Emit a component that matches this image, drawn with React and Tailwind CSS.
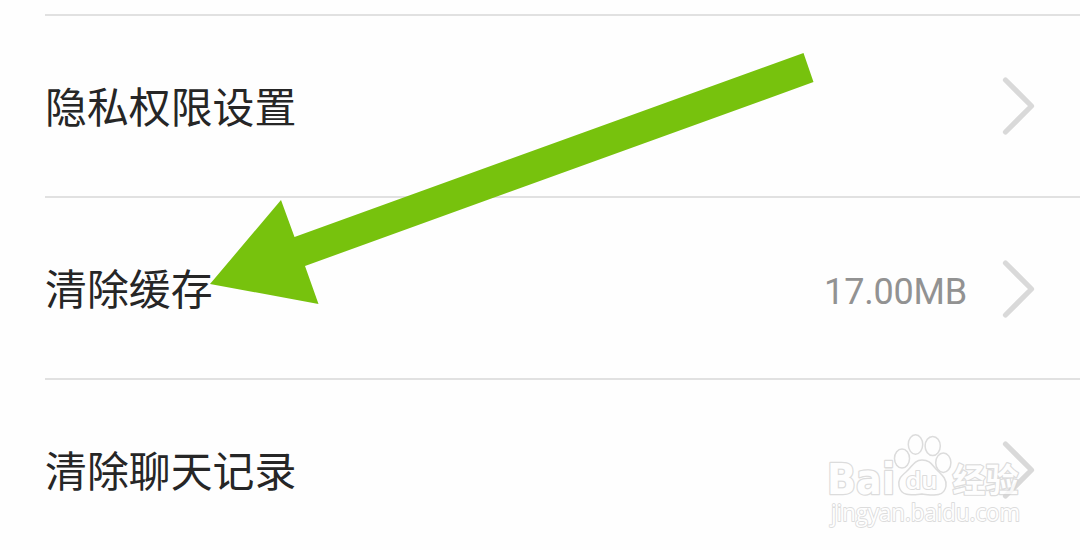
const rows = [
  { label: '隐私权限设置' },
  { label: '清除缓存', value: '17.00MB' },
  { label: '清除聊天记录' },
];

function Chevron() {
  return (
    <svg className="h-[60px] w-[36px]" viewBox="0 0 36 60" fill="none" stroke="#d9d9d9" strokeWidth="5.2" strokeLinecap="round" strokeLinejoin="round">
      <path d="M5.5 4 31.5 30 5.5 56" />
    </svg>
  );
}

function Row({ label, value }) {
  return (
    <div className="ml-[45px] flex h-[182px] shrink-0 items-center border-t-2 border-[#e1e1e1] pr-[44px]">
      <span className="mb-[2px] whitespace-nowrap text-[41.9px] leading-[60px] text-[#262626]">{label}</span>
      <span className="mt-[8px] ml-auto mr-[33px] font-[Roboto] text-[36px] leading-[44px] tracking-[-0.2px] text-[#929292]">{value}</span>
      <div className={value ? 'mt-[2px]' : 'mb-px'}>
        <Chevron />
      </div>
    </div>
  );
}

function Arrow() {
  return (
    <svg className="absolute left-0 top-0 h-[550px] w-[1080px]" viewBox="0 0 1080 550">
      <path fill="#77c20d" d="M210 284 281 200 294.5 237 803.5 53 813.5 82 305 266 318.5 304Z" />
    </svg>
  );
}

function OutlinedText({ children, outline, ...props }) {
  return (
    <text
      className="[paint-order:stroke]"
      fill="#fff"
      stroke="#d4d4d4"
      strokeWidth={outline}
      strokeLinejoin="round"
      lengthAdjust="spacingAndGlyphs"
      {...props}
    >
      {children}
    </text>
  );
}

function Watermark() {
  return (
    <svg className="absolute left-[820px] top-[425px] h-[110px] w-[215px]" viewBox="820 425 215 110" opacity="0.8">
      <OutlinedText x="827" y="494" fontFamily="DejaVu Sans" fontWeight="700" fontSize="42" textLength="68" outline={2.6}>Bai</OutlinedText>
      <g fill="#fff" stroke="#d4d4d4" strokeWidth="1.5">
        <ellipse cx="902" cy="458.5" rx="7.5" ry="9.5" />
        <ellipse cx="915.5" cy="444.5" rx="7.2" ry="9.7" />
        <ellipse cx="932.7" cy="446" rx="7.6" ry="9.5" />
        <ellipse cx="943.3" cy="462.7" rx="7.6" ry="9.7" />
        <path d="M922 460C914 460 912 467 906 472 900 477 898 480 899 486 901 497 912 495 922 494 932 495 944 498 946 486 947 479 942 475 937 470 932 465 930 460 922 460Z" />
      </g>
      <OutlinedText x="905.5" y="489" fontFamily="Open Sans" fontWeight="600" fontSize="24" textLength="32" outline={2}>du</OutlinedText>
      <OutlinedText x="952.5" y="492" fontFamily="Noto Sans CJK SC" fontWeight="700" fontSize="33" textLength="66" outline={2.4}>经验</OutlinedText>
      <OutlinedText x="831" y="520.5" fontFamily="Open Sans" fontSize="23" textLength="189" outline={1.8}>jingyan.baidu.com</OutlinedText>
    </svg>
  );
}

export default function App() {
  return (
    <main className="relative flex h-[550px] w-[1080px] flex-col overflow-hidden bg-[#fefefe] pt-[14px] font-['Noto_Sans_CJK_SC',sans-serif]">
      {rows.map((row) => (
        <Row key={row.label} {...row} />
      ))}
      <Arrow />
      <Watermark />
    </main>
  );
}
